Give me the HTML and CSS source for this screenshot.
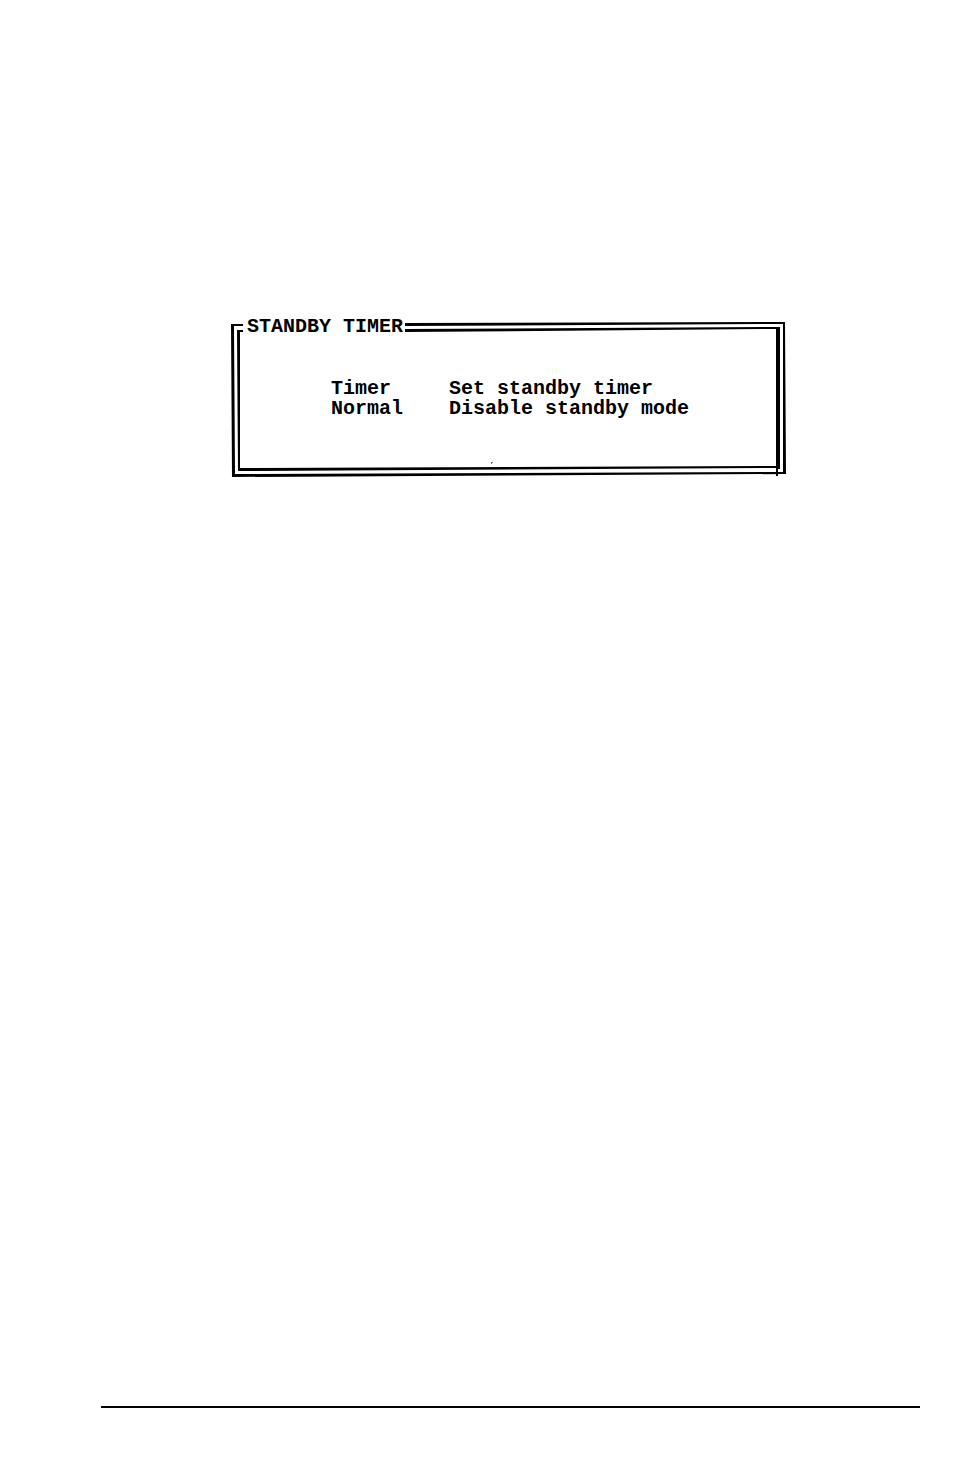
FILE: index.html
```
<!DOCTYPE html>
<html lang="en">
<head>
    <meta charset="UTF-8">
    <meta name="viewport" content="width=device-width, initial-scale=1.0">
    <link rel="stylesheet" href="styles.css">
    <title>Standby Timer</title>
</head>
<body>
    <main class="page">
        <section class="timer-box">
            <!-- double frame, open at the top left for the title -->
            <svg class="frame" viewBox="0 0 555 156" preserveAspectRatio="none" aria-hidden="true">
                <path d="M0 3H12V5H3L4 153L552 151L552 3L174 5V2L554 1L555 153L1 156Z"/>
                <path d="M6 9H12V11H9V147L545 145V8L174 11V8L545 6H549V148H547V155H545V147L7 150Z"/>
                <path d="M260 141h2v1h-1v1h-1z" fill="#777"/>
            </svg>
            <h1 class="box-title">STANDBY TIMER</h1>
            <dl class="option-list">
                <dt>Timer</dt>
                <dd>Set standby timer</dd>
                <dt>Normal</dt>
                <dd>Disable standby mode</dd>
            </dl>
        </section>
        <hr class="footer-line">
    </main>
</body>
</html>
```

FILE: styles.css
```
body {
    margin: 0;
    background-color: #fff;
    color: #000;
    font-family: "Liberation Mono", "Courier New", monospace;
    font-size: 20px;
    font-weight: bold;
    line-height: 20px;
}

.page {
    display: flex;
    flex-direction: column;
    min-height: 100vh;
    box-sizing: border-box;
    padding: 317px 34px 64px 101px;
}

.timer-box {
    position: relative;
    margin: 0 134px 0 130px;
    padding-bottom: 58px;
}

.frame {
    position: absolute;
    top: 4px;
    left: 0;
    width: 100%;
    height: calc(100% - 4px);
}

.box-title {
    position: relative;
    margin: 0 16px 42px;
    font-size: 20px;
    line-height: 20px;
}

.option-list {
    position: relative;
    display: grid;
    grid-template-columns: 118px 1fr;
    margin: 0 0 0 100px;
}

.option-list dd {
    margin: 0;
}

.footer-line {
    width: 100%;
    height: 2px;
    margin: auto 0 0;
    border: none;
    background-color: #000;
}
```
